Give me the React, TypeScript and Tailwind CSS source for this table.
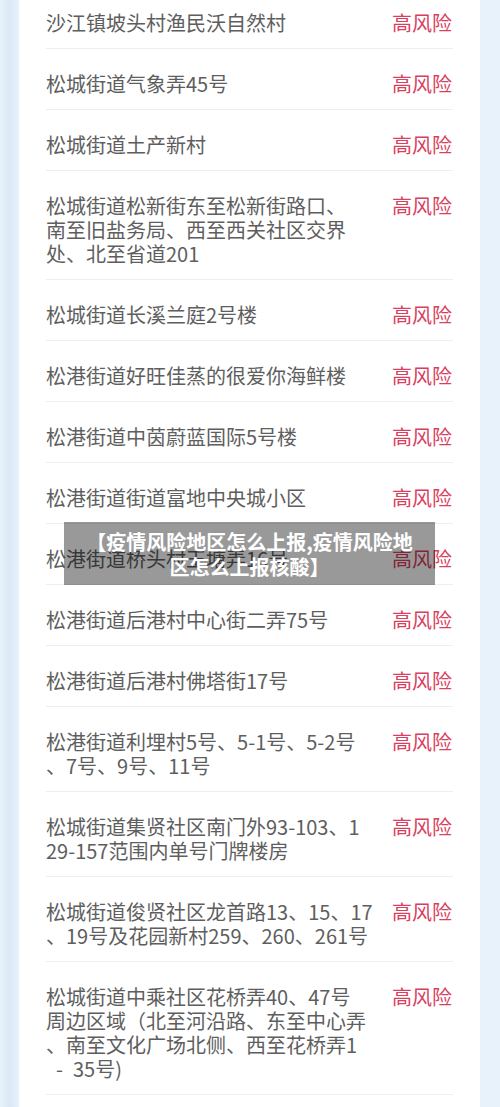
import React from "react";

type Row = { lines: string[] };

const rows: Row[] = [
  { lines: ["沙江镇坡头村渔民沃自然村"] },
  { lines: ["松城街道气象弄45号"] },
  { lines: ["松城街道土产新村"] },
  { lines: ["松城街道松新街东至松新街路口、", "南至旧盐务局、西至西关社区交界", "处、北至省道201"] },
  { lines: ["松城街道长溪兰庭2号楼"] },
  { lines: ["松港街道好旺佳蒸的很爱你海鲜楼"] },
  { lines: ["松港街道中茵蔚蓝国际5号楼"] },
  { lines: ["松港街道街道富地中央城小区"] },
  { lines: ["松港街道桥头村王塘弄16号"] },
  { lines: ["松港街道后港村中心街二弄75号"] },
  { lines: ["松港街道后港村佛塔街17号"] },
  { lines: ["松港街道利埋村5号、5-1号、5-2号", "、7号、9号、11号"] },
  { lines: ["松城街道集贤社区南门外93-103、1", "29-157范围内单号门牌楼房"] },
  { lines: ["松城街道俊贤社区龙首路13、15、17", "、19号及花园新村259、260、261号"] },
  {
    lines: [
      "松城街道中乘社区花桥弄40、47号",
      "周边区域（北至河沿路、东至中心弄",
      "、南至文化广场北侧、西至花桥弄1",
      "\u2002-\u200235号)",
    ],
  },
];

export default function App() {
  return (
    <div
      className="relative h-[1107px] w-[500px] overflow-hidden bg-[#e4f0fa]"
      style={{ fontFamily: '"Noto Sans CJK SC", "Noto Sans", sans-serif' }}
    >
      <div className="flex h-full">
        <div className="w-[19px] shrink-0 bg-gradient-to-r from-[#e8f2fb] via-[#dbe9f6] to-[#e6f1fa]" />
        <div className="w-[461px] shrink-0 bg-white px-[27px]">
          <div className="-mt-[12px]">
            {rows.map((r, i) => (
              <div
                key={i}
                className="flex items-start justify-between border-b border-[#eeeeee] pt-[23px] pb-[13px]"
              >
                <div className="text-[20px] leading-[24px] text-[#5e5e5e]">
                  {r.lines.map((l, j) => (
                    <div key={j} className="whitespace-nowrap">
                      {l}
                    </div>
                  ))}
                </div>
                <div className="whitespace-nowrap pr-[1px] text-[20px] leading-[24px] text-[#d93f5e]">
                  高风险
                </div>
              </div>
            ))}
          </div>
        </div>
        <div className="w-[20px] shrink-0 bg-[#e7f2fb]" />
      </div>

      <div className="absolute left-[64px] top-[522px] flex h-[63px] w-[371px] items-center justify-center bg-black/40 text-center text-[20px] font-bold leading-[25px] text-white">
        <div>
          【疫情风险地区怎么上报,疫情风险地
          <br />
          区怎么上报核酸】
        </div>
      </div>
    </div>
  );
}
